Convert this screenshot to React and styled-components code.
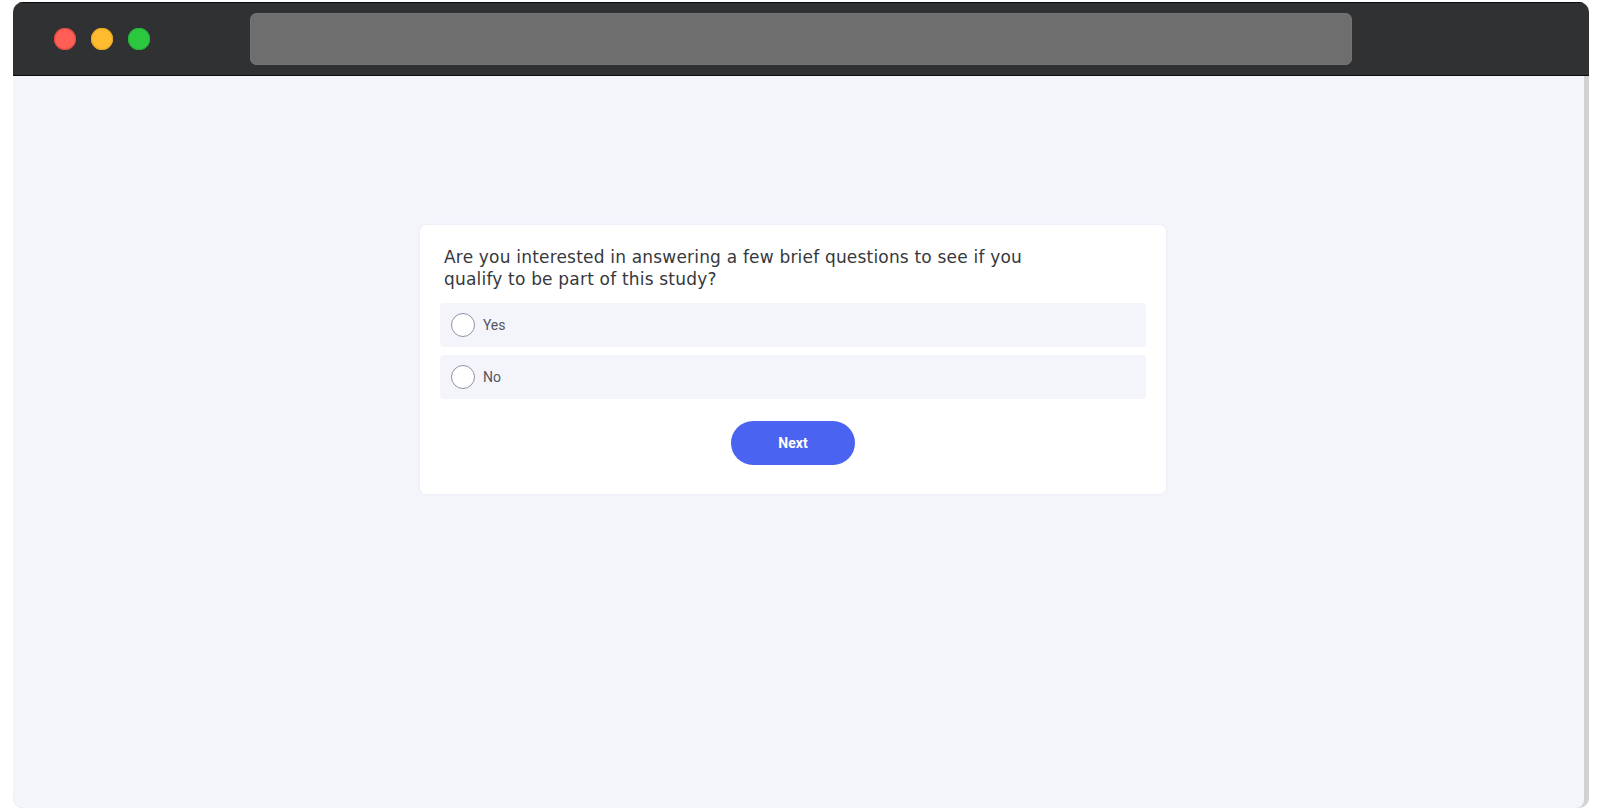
import React from "react";
import styled, { createGlobalStyle } from "styled-components";

const Global = createGlobalStyle`
  html, body { margin: 0; padding: 0; background: #ffffff; overflow: hidden; }
  body { font-family: Roboto, "Liberation Sans", sans-serif; }
`;

const Page = styled.div`
  width: 1600px;
  height: 810px;
  padding: 2px 11px 2px 13px;
  box-sizing: border-box;
`;

const BrowserWindow = styled.div`
  height: 806px;
  display: flex;
  flex-direction: column;
  border-radius: 10px;
  overflow: hidden;
  background: #d2d2d2;
`;

const TitleBar = styled.header`
  flex: 0 0 74px;
  box-sizing: border-box;
  display: flex;
  align-items: center;
  padding: 0 237px 0 41px;
  background: #303133;
  border-top: 1px solid #0c0c0c;
  border-bottom: 1px solid #0c0c0c;
`;

const Lights = styled.div`
  display: flex;
  gap: 15px;
  margin-right: 100px;
`;

const Light = styled.span`
  width: 22px;
  height: 22px;
  border-radius: 50%;
  background: ${(p) => p.$color};
  box-shadow: inset 0 0 0 1px ${(p) => p.$edge};
`;

const AddressBar = styled.div`
  flex: 1;
  height: 52px;
  border-radius: 7px;
  background: #6e6e6e;
  box-shadow: inset 0 0 0 1px #747474;
`;

const Viewport = styled.main`
  flex: 1;
  margin-right: 5px;
  background: #f3f5fb;
  border-bottom-right-radius: 8px;
  border-bottom-left-radius: 10px;
  padding: 149px 0 0 407px;
`;

const Card = styled.section`
  width: 746px;
  height: 269px;
  box-sizing: border-box;
  padding: 21px 20px 0;
  background: #ffffff;
  border-radius: 6px;
  box-shadow: 0 0 2px rgba(180, 184, 205, 0.3);
`;

const Question = styled.h1`
  margin: 0 0 13px 4px;
  width: 620px;
  font-family: "DejaVu Sans", sans-serif;
  font-size: 17px;
  font-weight: 400;
  line-height: 22px;
  letter-spacing: 0.19px;
  color: #36383d;
`;

const Options = styled.div`
  display: flex;
  flex-direction: column;
  gap: 7.5px;
`;

const Option = styled.label`
  height: 44px;
  display: flex;
  align-items: center;
  gap: 8px;
  padding-left: 11px;
  background: #f3f5fb;
  border-radius: 4px;
  font-size: 14px;
  letter-spacing: -0.1px;
  color: #54565e;
`;

const Radio = styled.span`
  width: 24px;
  height: 24px;
  box-sizing: border-box;
  border: 1px solid #8f91a3;
  border-radius: 50%;
  background: #ffffff;
`;

const Actions = styled.div`
  display: flex;
  justify-content: center;
  margin-top: 22px;
`;

const NextButton = styled.button`
  width: 124px;
  height: 44px;
  border: 0;
  border-radius: 22px;
  background: #4a63f0;
  color: #ffffff;
  font-family: Roboto, sans-serif;
  font-size: 14px;
  font-weight: 700;
`;

export default function App() {
  return (
    <>
      <Global />
      <Page>
        <BrowserWindow>
          <TitleBar>
            <Lights>
              <Light $color="#ff5f57" $edge="#d9483f" />
              <Light $color="#febc2e" $edge="#e5a823" />
              <Light $color="#2cc840" $edge="#27b639" />
            </Lights>
            <AddressBar />
          </TitleBar>
          <Viewport>
            <Card>
              <Question>
                Are you interested in answering a few brief questions to see if you
                <br />
                qualify to be part of this study?
              </Question>
              <Options>
                <Option>
                  <Radio />
                  Yes
                </Option>
                <Option>
                  <Radio />
                  No
                </Option>
              </Options>
              <Actions>
                <NextButton>Next</NextButton>
              </Actions>
            </Card>
          </Viewport>
        </BrowserWindow>
      </Page>
    </>
  );
}
